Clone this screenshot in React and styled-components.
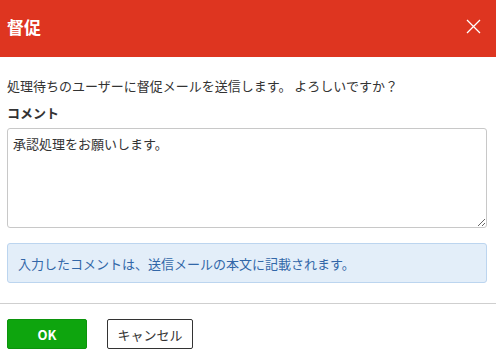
import React from "react";
import styled, { createGlobalStyle } from "styled-components";

const GlobalStyle = createGlobalStyle`
  html, body {
    margin: 0;
    padding: 0;
    background: #fff;
  }
  body {
    font-family: "Noto Sans CJK JP", "Noto Sans", sans-serif;
    color: #333;
  }
`;

const Dialog = styled.div`
  width: 496px;
  display: flex;
  flex-direction: column;
`;

const Header = styled.div`
  height: 57px;
  background: #de3520;
  display: flex;
  align-items: center;
  justify-content: space-between;
  padding: 0 15px 5px 7px;
  box-sizing: border-box;
`;

const Title = styled.h1`
  margin: 0;
  font-size: 17px;
  font-weight: bold;
  color: #fff;
`;

const CloseButton = styled.button`
  border: none;
  background: none;
  padding: 0;
  width: 15px;
  height: 15px;
  display: flex;
  cursor: pointer;
`;

const Body = styled.div`
  padding: 19px 9px 0 7px;
  display: flex;
  flex-direction: column;
`;

const Message = styled.p`
  margin: 0;
  font-size: 13px;
  line-height: 20px;
`;

const Label = styled.div`
  margin-top: 7px;
  font-size: 13px;
  line-height: 20px;
  font-weight: bold;
`;

const Comment = styled.textarea`
  margin-top: 5px;
  height: 100px;
  box-sizing: border-box;
  border: 1px solid #c8c8c8;
  border-radius: 3px;
  padding: 6px 5px;
  font-family: "Noto Sans CJK JP", "Noto Sans", sans-serif;
  font-size: 13px;
  line-height: 18px;
  color: #333;
  resize: vertical;
  outline: none;
`;

const Notice = styled.div`
  margin-top: 15px;
  height: 40px;
  box-sizing: border-box;
  display: flex;
  align-items: center;
  padding: 0 10px;
  background: #e3eef9;
  border: 1px solid #bcd5ef;
  border-radius: 3px;
  color: #3267a8;
  font-size: 13px;
`;

const Divider = styled.hr`
  margin: 20px 0 0;
  border: none;
  border-top: 1px solid #cfcfcf;
`;

const Footer = styled.div`
  display: flex;
  gap: 20px;
  padding: 15px 7px;
`;

const Button = styled.button`
  height: 30px;
  box-sizing: border-box;
  border-radius: 2px;
  font-family: "Noto Sans CJK JP", "Noto Sans", sans-serif;
  font-size: 13px;
  cursor: pointer;
  ${(p) =>
    p.primary
      ? `
    width: 80px;
    background: #0ea50e;
    border: 1px solid #0c940c;
    color: #fff;
    font-weight: bold;
  `
      : `
    width: 86px;
    background: #fff;
    border: 1px solid #333;
    color: #333;
  `}
`;

export default function App() {
  return (
    <>
      <GlobalStyle />
      <Dialog>
        <Header>
          <Title>督促</Title>
          <CloseButton aria-label="閉じる">
            <svg width="15" height="15" viewBox="0 0 15 15">
              <path d="M1 1 L14 14 M14 1 L1 14" stroke="#fff" strokeWidth="1.3" />
            </svg>
          </CloseButton>
        </Header>
        <Body>
          <Message>処理待ちのユーザーに督促メールを送信します。 よろしいですか？</Message>
          <Label>コメント</Label>
          <Comment defaultValue="承認処理をお願いします。" />
          <Notice>入力したコメントは、送信メールの本文に記載されます。</Notice>
        </Body>
        <Divider />
        <Footer>
          <Button primary>OK</Button>
          <Button>キャンセル</Button>
        </Footer>
      </Dialog>
    </>
  );
}
